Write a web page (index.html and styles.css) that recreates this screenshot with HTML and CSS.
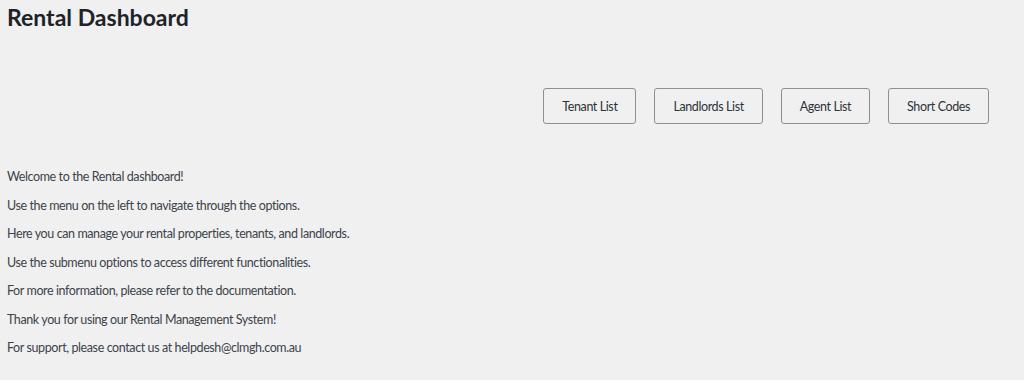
FILE: index.html
```html
<!DOCTYPE html>
<html>
	<head>
		<meta charset="utf-8">
		<title>Rental Dashboard</title>
		<link rel="stylesheet" href="styles.css">
	</head>
	<body>
		<div class="wrap">
			<h1 class="title">Rental Dashboard</h1>
			<div class="actions">
				<a class="button" href="#">Tenant List</a>
				<a class="button" href="#">Landlords List</a>
				<a class="button" href="#">Agent List</a>
				<a class="button" href="#">Short Codes</a>
			</div>
			<div class="intro">
				<p>Welcome to the Rental dashboard!</p>
				<p>Use the menu on the left to navigate through the options.</p>
				<p>Here you can manage your rental properties, tenants, and landlords.</p>
				<p>Use the submenu options to access different functionalities.</p>
				<p>For more information, please refer to the documentation.</p>
				<p>Thank you for using our Rental Management System!</p>
				<p>For support, please contact us at helpdesh@clmgh.com.au</p>
			</div>
		</div>
	</body>
</html>
```

FILE: styles.css
```css
* {
	margin: 0;
	padding: 0;
	box-sizing: border-box;
}

a {
	text-decoration: none;
}

html,
body {
	height: 100%;
	overflow: hidden;
}

body {
	background-color: #f0f0f1;
	color: #3c434a;
	font-family: Lato, "Noto Sans", sans-serif;
	font-size: 12.5px;
	letter-spacing: -0.4px;
}

.wrap {
	padding: 2px 35px 0 7px;
}

.title {
	font-size: 23px;
	font-weight: 700;
	line-height: 30px;
	letter-spacing: 0;
	color: #1d2327;
}

.actions {
	display: flex;
	justify-content: flex-end;
	gap: 18px;
	margin-top: 56px;
}

.actions .button {
	display: block;
	height: 36px;
	line-height: 32px;
	padding: 2px 18px 0;
	border: 1px solid #8c8f94;
	border-radius: 3px;
	background-color: #f0f0f1;
	color: #2c3338;
}

.intro {
	margin-top: 43px;
}

.intro p {
	line-height: 19.5px;
	margin-bottom: 9px;
}
```
